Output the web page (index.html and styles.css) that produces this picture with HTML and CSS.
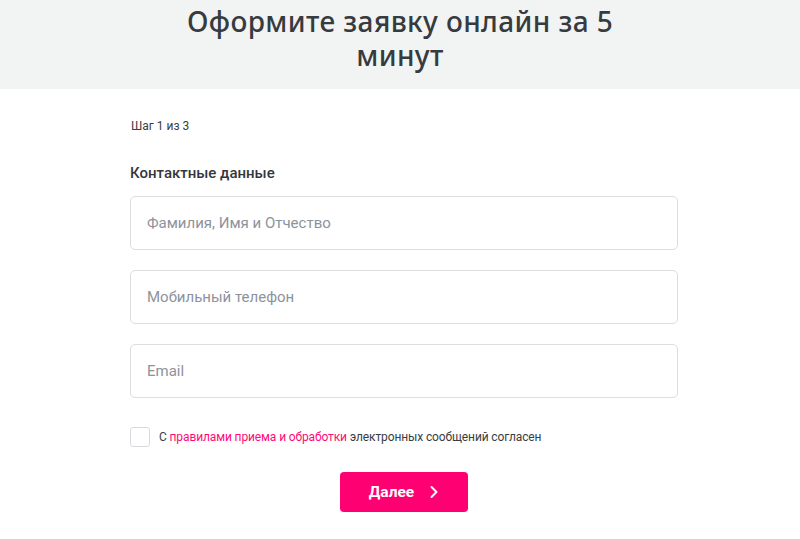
FILE: index.html
```html
<!DOCTYPE html>
<html lang="ru">
<head>
<meta charset="utf-8">
<title>Оформите заявку</title>
<link rel="stylesheet" href="styles.css">
</head>
<body>
<header class="hero">
  <h1 class="hero-title">Оформите заявку онлайн за 5<br>минут</h1>
</header>
<main class="form-wrap">
  <p class="step">Шаг 1 из 3</p>
  <h2 class="section-title">Контактные данные</h2>
  <form class="form">
    <input class="field" type="text" placeholder="Фамилия, Имя и Отчество">
    <input class="field" type="tel" placeholder="Мобильный телефон">
    <input class="field" type="email" placeholder="Email">
    <label class="agree">
      <span class="checkbox"></span>
      <span class="agree-text">С <a class="link" href="#">правилами приема и обработки</a> электронных сообщений согласен</span>
    </label>
    <div class="actions">
      <button class="btn" type="button">Далее
        <svg class="chev" width="10" height="14" viewBox="0 0 10 14"><path d="M2.5 2 L7.5 7 L2.5 12" fill="none" stroke="#fff" stroke-width="2" stroke-linecap="round" stroke-linejoin="round"/></svg>
      </button>
    </div>
  </form>
</main>
</body>
</html>
```

FILE: styles.css
```css
* { box-sizing: border-box; }
html, body { margin: 0; padding: 0; background: #fff; }
body { font-family: Roboto, "Liberation Sans", sans-serif; color: #3a3d42; }

.hero {
  background: #f2f3f3;
  height: 89px;
  display: flex;
  justify-content: center;
  padding-top: 4px;
}
.hero-title {
  margin: 0;
  font-family: "Noto Sans", "Open Sans", sans-serif;
  font-weight: 500;
  font-size: 28px;
  line-height: 34px;
  text-align: center;
  color: #363b40;
  letter-spacing: 0.4px;
}

.form-wrap {
  width: 548px;
  margin: 0 0 0 130px;
  padding-top: 29px;
}
.step {
  margin: 0 0 0 1px;
  font-size: 12px;
  line-height: 16px;
  color: #3a3d42;
}
.section-title {
  margin: 29px 0 0 0;
  font-size: 15px;
  line-height: 20px;
  font-weight: 500;
  color: #33373c;
}
.form {
  margin-top: 13px;
  display: flex;
  flex-direction: column;
  gap: 20px;
}
.field {
  display: block;
  width: 548px;
  height: 54px;
  border: 1px solid #dcdde0;
  border-radius: 5px;
  padding: 0 16px;
  font-family: Roboto, "Liberation Sans", sans-serif;
  font-size: 15px;
  color: #333;
  background: #fff;
  outline: none;
}
.field::placeholder { color: #8e929c; }

.agree {
  display: flex;
  align-items: center;
  gap: 9px;
  margin-top: 9px;
  font-size: 12px;
  letter-spacing: -0.12px;
  color: #3a3d42;
}
.checkbox {
  width: 20px;
  height: 20px;
  border: 1px solid #d8dadd;
  border-radius: 3px;
  background: #fff;
  flex: none;
}
.link { color: #ff0a78; text-decoration: none; }

.actions {
  display: flex;
  justify-content: center;
  margin-top: 5px;
}
.btn {
  width: 128px;
  height: 40px;
  border: none;
  border-radius: 4px;
  background: #ff0073;
  color: #fff;
  font-family: Roboto, "Liberation Sans", sans-serif;
  font-weight: 700;
  font-size: 15.5px;
  display: flex;
  align-items: center;
  justify-content: center;
  gap: 15px;
  padding: 0;
}
.chev { display: block; }
```
